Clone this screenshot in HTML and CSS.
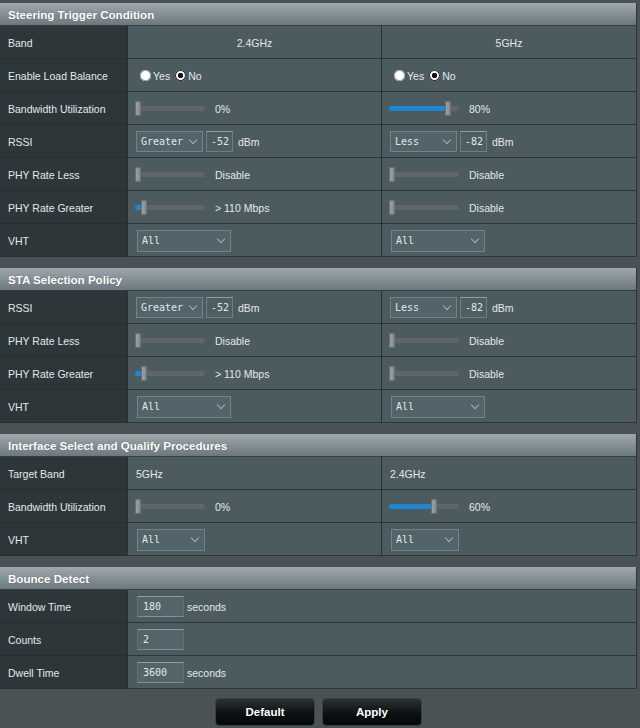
FILE: index.html
```html
<!DOCTYPE html>
<html>
<head>
<meta charset="utf-8">
<link rel="stylesheet" href="styles.css">
</head>
<body>
<div class="page">

  <section class="sect">
    <div class="head">Steering Trigger Condition</div>
    <div class="row">
      <div class="lbl">Band</div>
      <div class="val center">2.4GHz</div>
      <div class="val center last">5GHz</div>
    </div>
    <div class="row">
      <div class="lbl">Enable Load Balance</div>
      <div class="val"><span class="radio"></span><span class="rtxt">Yes</span><span class="radio on"></span><span class="rtxt">No</span></div>
      <div class="val last"><span class="radio"></span><span class="rtxt">Yes</span><span class="radio on"></span><span class="rtxt">No</span></div>
    </div>
    <div class="row">
      <div class="lbl">Bandwidth Utilization</div>
      <div class="val"><div class="slider"><div class="fill" style="width:0%"></div><div class="thumb"></div><div class="rest"></div></div><span class="sval">0%</span></div>
      <div class="val last"><div class="slider"><div class="fill" style="width:80%"></div><div class="thumb"></div><div class="rest"></div></div><span class="sval">80%</span></div>
    </div>
    <div class="row">
      <div class="lbl">RSSI</div>
      <div class="val"><div class="sel w67"><span>Greater</span><span class="chev"></span></div><div class="num">-52</div><span class="unit">dBm</span></div>
      <div class="val last"><div class="sel w67"><span>Less</span><span class="chev"></span></div><div class="num">-82</div><span class="unit">dBm</span></div>
    </div>
    <div class="row">
      <div class="lbl">PHY Rate Less</div>
      <div class="val"><div class="slider"><div class="fill" style="width:0%"></div><div class="thumb"></div><div class="rest"></div></div><span class="sval">Disable</span></div>
      <div class="val last"><div class="slider"><div class="fill" style="width:0%"></div><div class="thumb"></div><div class="rest"></div></div><span class="sval">Disable</span></div>
    </div>
    <div class="row">
      <div class="lbl">PHY Rate Greater</div>
      <div class="val"><div class="slider"><div class="fill" style="width:9%"></div><div class="thumb"></div><div class="rest"></div></div><span class="sval">&gt; 110 Mbps</span></div>
      <div class="val last"><div class="slider"><div class="fill" style="width:0%"></div><div class="thumb"></div><div class="rest"></div></div><span class="sval">Disable</span></div>
    </div>
    <div class="row">
      <div class="lbl">VHT</div>
      <div class="val"><div class="sel w94"><span>All</span><span class="chev"></span></div></div>
      <div class="val last"><div class="sel w94"><span>All</span><span class="chev"></span></div></div>
    </div>
  </section>

  <section class="sect">
    <div class="head">STA Selection Policy</div>
    <div class="row">
      <div class="lbl">RSSI</div>
      <div class="val"><div class="sel w67"><span>Greater</span><span class="chev"></span></div><div class="num">-52</div><span class="unit">dBm</span></div>
      <div class="val last"><div class="sel w67"><span>Less</span><span class="chev"></span></div><div class="num">-82</div><span class="unit">dBm</span></div>
    </div>
    <div class="row">
      <div class="lbl">PHY Rate Less</div>
      <div class="val"><div class="slider"><div class="fill" style="width:0%"></div><div class="thumb"></div><div class="rest"></div></div><span class="sval">Disable</span></div>
      <div class="val last"><div class="slider"><div class="fill" style="width:0%"></div><div class="thumb"></div><div class="rest"></div></div><span class="sval">Disable</span></div>
    </div>
    <div class="row">
      <div class="lbl">PHY Rate Greater</div>
      <div class="val"><div class="slider"><div class="fill" style="width:9%"></div><div class="thumb"></div><div class="rest"></div></div><span class="sval">&gt; 110 Mbps</span></div>
      <div class="val last"><div class="slider"><div class="fill" style="width:0%"></div><div class="thumb"></div><div class="rest"></div></div><span class="sval">Disable</span></div>
    </div>
    <div class="row">
      <div class="lbl">VHT</div>
      <div class="val"><div class="sel w94"><span>All</span><span class="chev"></span></div></div>
      <div class="val last"><div class="sel w94"><span>All</span><span class="chev"></span></div></div>
    </div>
  </section>

  <section class="sect">
    <div class="head">Interface Select and Qualify Procedures</div>
    <div class="row">
      <div class="lbl">Target Band</div>
      <div class="val">5GHz</div>
      <div class="val last">2.4GHz</div>
    </div>
    <div class="row">
      <div class="lbl">Bandwidth Utilization</div>
      <div class="val"><div class="slider"><div class="fill" style="width:0%"></div><div class="thumb"></div><div class="rest"></div></div><span class="sval">0%</span></div>
      <div class="val last"><div class="slider"><div class="fill" style="width:60%"></div><div class="thumb"></div><div class="rest"></div></div><span class="sval">60%</span></div>
    </div>
    <div class="row">
      <div class="lbl">VHT</div>
      <div class="val"><div class="sel w68"><span>All</span><span class="chev"></span></div></div>
      <div class="val last"><div class="sel w68"><span>All</span><span class="chev"></span></div></div>
    </div>
  </section>

  <section class="sect final">
    <div class="head">Bounce Detect</div>
    <div class="row">
      <div class="lbl">Window Time</div>
      <div class="val span last"><div class="box">180</div><span class="unit">seconds</span></div>
    </div>
    <div class="row">
      <div class="lbl">Counts</div>
      <div class="val span last"><div class="box">2</div></div>
    </div>
    <div class="row">
      <div class="lbl">Dwell Time</div>
      <div class="val span last"><div class="box">3600</div><span class="unit">seconds</span></div>
    </div>
  </section>

  <div class="actions">
    <button class="btn">Default</button>
    <button class="btn">Apply</button>
  </div>
</div>
</body>
</html>
```

FILE: styles.css
```css
html, body {
  margin: 0;
  padding: 0;
  background: #4a5255;
}
body {
  font-family: "Liberation Sans", Arial, sans-serif;
  font-size: 10.5px;
  color: #e4e8ea;
}
.page {
  width: 637px;
  padding-top: 3px;
  background: #4a5255;
}
.sect {
  margin-bottom: 11px;
  border-right: 1px solid #2f373a;
}
.sect.final {
  margin-bottom: 0;
}
.head {
  height: 22px;
  line-height: 23px;
  padding-left: 8px;
  font-weight: bold;
  font-size: 11.6px;
  color: #ffffff;
  text-shadow: 0 0 1px rgba(0,0,0,0.35);
  background: linear-gradient(#9ea9ae, #6c787d);
  border-bottom: 1px solid #353e41;
}
.row {
  display: grid;
  grid-template-columns: 128px 254px 254px;
  height: 33px;
}
.lbl {
  background: #2d373a;
  border-right: 1px solid #263033;
  border-bottom: 1px solid #263033;
  padding-left: 8px;
  display: flex;
  align-items: center;
  padding-top: 1px;
}
.val {
  background: #4b5b60;
  border-right: 1px solid #283134;
  border-bottom: 1px solid #2c3538;
  padding-left: 8px;
  display: flex;
  align-items: center;
  padding-top: 1px;
}
.val.last {
  border-right: 0;
}
.val.span {
  grid-column: 2 / 4;
}
.val.center {
  justify-content: center;
  padding-left: 0;
}

/* radio */
.radio {
  width: 11px;
  height: 11px;
  border-radius: 50%;
  background: #ffffff;
  box-shadow: 0 0 0 1px #9aa3a6 inset;
  margin-left: 4px;
  margin-right: 2px;
  flex: none;
}
.radio.on {
  background: radial-gradient(circle, #111 0 2.4px, #fff 3px);
  box-shadow: 0 0 0 1px #222 inset;
}
.rtxt {
  margin-right: 1px;
}

/* slider */
.slider {
  width: 70px;
  height: 15px;
  display: flex;
  align-items: center;
  margin-left: -1px;
}
.fill {
  height: 5px;
  background: #1e87d2;
  border-radius: 2px 0 0 2px;
  max-width: 64px;
}
.thumb {
  width: 6px;
  height: 15px;
  border-radius: 2px;
  background: linear-gradient(90deg, #a2a5a6, #818586);
  box-shadow: 0 0 0 1px #6c7071 inset;
  flex: none;
}
.rest {
  flex: 1;
  height: 5px;
  background: #606668;
  border-radius: 0 3px 3px 0;
}
.sval {
  margin-left: 10px;
}

/* select */
.sel {
  height: 21px;
  border: 1px solid #72838a;
  background: #526469;
  display: flex;
  align-items: center;
  justify-content: space-between;
  padding: 0 6px 0 4px;
  box-sizing: border-box;
  font-family: "DejaVu Sans Mono", "Liberation Mono", monospace;
  font-size: 10px;
  color: #e3e7e8;
}
.w67 { width: 67px; }
.w94 { width: 94px; margin-left: 1px; height: 22px; }
.w68 { width: 68px; margin-left: 1px; height: 22px; }
.chev {
  width: 5px;
  height: 5px;
  border-right: 1px solid #a6b1b4;
  border-bottom: 1px solid #a6b1b4;
  transform: rotate(45deg);
  margin-top: -4px;
}
.num {
  width: 27px;
  height: 21px;
  box-sizing: border-box;
  margin-left: 3px;
  border: 1px solid #6d7e84;
  border-top-color: #8e9ea3;
  background: #4e5f64;
  font-family: "DejaVu Sans Mono", "Liberation Mono", monospace;
  font-size: 10px;
  display: flex;
  align-items: center;
  justify-content: flex-end;
  padding-right: 3px;
  color: #e3e7e8;
}
.unit {
  margin-left: 5px;
}

/* bounce inputs */
.box {
  width: 47px;
  height: 21px;
  box-sizing: border-box;
  margin-left: 1px;
  border: 1px solid #5f7075;
  border-top-color: #909fa4;
  border-bottom-color: #7f8f94;
  background: #53656b;
  font-family: "DejaVu Sans Mono", "Liberation Mono", monospace;
  font-size: 10px;
  display: flex;
  align-items: center;
  padding-left: 5px;
  color: #e3e7e8;
}
.box + .unit {
  margin-left: 3px;
}

/* actions */
.actions {
  display: flex;
  justify-content: center;
  gap: 7px;
  padding-top: 9px;
  width: 637px;
}
.btn {
  width: 100px;
  height: 28px;
  border-radius: 4px;
  border: 1px solid #3a4042;
  background: linear-gradient(#2c3234, #0b0e0f 60%, #060809);
  color: #ffffff;
  font-family: "Liberation Sans", Arial, sans-serif;
  font-weight: bold;
  font-size: 11.5px;
  padding: 0;
}
```
